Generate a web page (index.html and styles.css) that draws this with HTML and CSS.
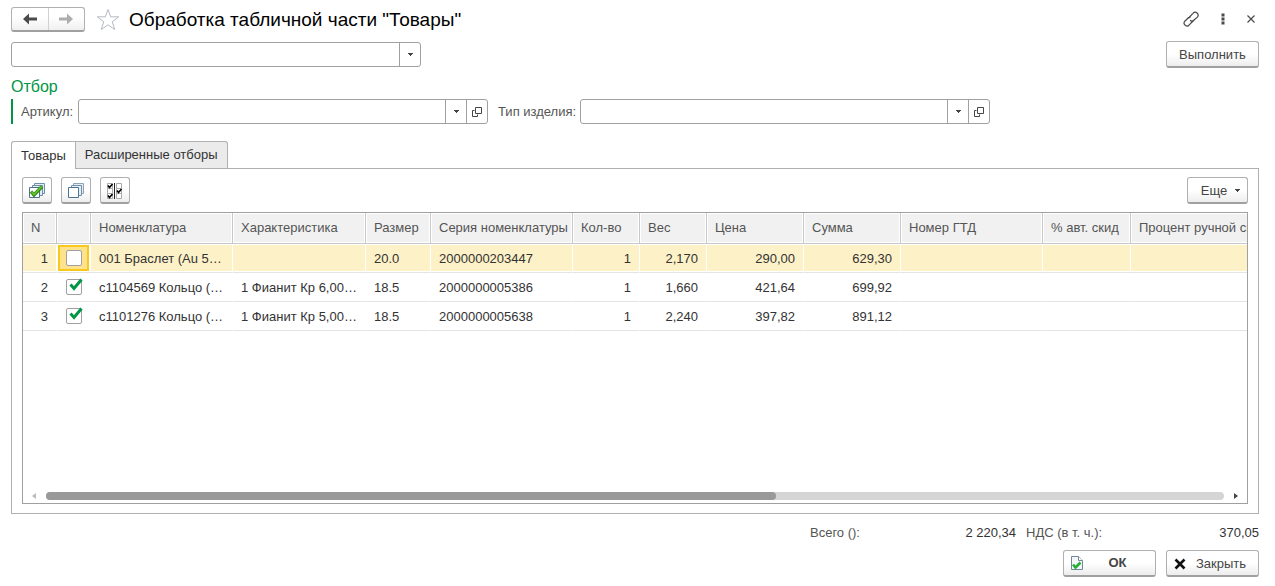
FILE: index.html
```html
<!DOCTYPE html>
<html lang="ru">
<head>
<meta charset="utf-8">
<title>Обработка табличной части "Товары"</title>
<link rel="stylesheet" href="styles.css">
</head>
<body>
<svg class="defs" aria-hidden="true">
  <symbol id="caret" viewBox="0 0 5 3"><path d="M0 0h5v1H4v1H3v1H2V2H1V1H0z" fill="#444"/></symbol>
  <symbol id="open" viewBox="0 0 10 10"><path d="M3.500.5h6v6h-6zM2.500 3.500H.5v6h5V7.500" fill="none" stroke="#444"/></symbol>
  <symbol id="tick" viewBox="0 0 14 14"><path d="M1.500 6.500 5 10.500 12.500 1.500" fill="none" stroke="#009646" stroke-width="3"/></symbol>
</svg>
<main class="page">
  <header class="titlebar">
    <div class="history">
      <button class="history-btn" aria-label="Назад"><svg width="14" height="12" viewBox="0 0 14 12"><path d="M0 6l6-5.500v4h8v3H6v4z" fill="#4a4a4a"/></svg></button>
      <button class="history-btn" aria-label="Вперед"><svg width="14" height="12" viewBox="0 0 14 12"><path d="M14 6L8 .5v4H0v3h8v4z" fill="#adadad"/></svg></button>
    </div>
    <button class="icon-btn star" aria-label="В избранное"><svg width="24" height="23" viewBox="0 0 24 23"><path d="M12 1.500l2.700 7.300h8l-6.400 4.900 2.400 7.800-6.700-4.700-6.700 4.700 2.400-7.800L1.300 8.800h8z" fill="#fff" stroke="#b4b9c1"/></svg></button>
    <h1 class="title">Обработка табличной части "Товары"</h1>
    <div class="window-tools">
      <button class="icon-btn" aria-label="Ссылка"><svg width="16" height="16" viewBox="0 0 16 16" fill="none" stroke="#4a4a4a" stroke-width="1.200" stroke-linecap="round"><path d="M6.500 6 10 2.300a2.500 2.500 0 0 1 4.300 3.800L10.800 9.300a2.400 2.400 0 0 1-3.300.2M9.500 10.500 6.300 13.800a2.500 2.500 0 0 1-4.500-3.600L5.400 6.800"/><path d="M5.400 6.800a2.400 2.400 0 0 1 1.600-.5M10.500 9.500 9.500 10.500"/></svg></button>
      <button class="icon-btn" aria-label="Меню"><svg width="4" height="12" viewBox="0 0 4 12" fill="#4a4a4a"><path d="M.5.500h3v3h-3zM.5 4.500h3v3h-3zM.5 8.500h3v3h-3z"/></svg></button>
      <button class="icon-btn" aria-label="Закрыть окно"><svg width="8" height="8" viewBox="0 0 8 8"><path d="M.5.500l7 7M7.500.500l-7 7" stroke="#4a4a4a" stroke-width="1.200"/></svg></button>
    </div>
  </header>

  <div class="action-row">
    <div class="field">
      <input class="field-input" type="text" aria-label="Действие">
      <button class="field-btn" aria-label="Выбрать действие"><svg width="5" height="3"><use href="#caret"/></svg></button>
    </div>
    <button class="btn btn-wide">Выполнить</button>
  </div>

  <section class="filter">
    <h2 class="filter-title">Отбор</h2>
    <div class="filter-row">
      <label class="filter-label" for="article">Артикул:</label>
      <div class="field">
        <input class="field-input" id="article" type="text">
        <button class="field-btn" aria-label="Список артикулов"><svg width="5" height="3"><use href="#caret"/></svg></button>
        <button class="field-btn" aria-label="Открыть артикул"><svg width="10" height="10"><use href="#open"/></svg></button>
      </div>
      <label class="filter-label" for="kind">Тип изделия:</label>
      <div class="field">
        <input class="field-input" id="kind" type="text">
        <button class="field-btn" aria-label="Список типов"><svg width="5" height="3"><use href="#caret"/></svg></button>
        <button class="field-btn" aria-label="Открыть тип"><svg width="10" height="10"><use href="#open"/></svg></button>
      </div>
    </div>
  </section>

  <div class="tabs" role="tablist">
    <button class="tab tab-active" role="tab" aria-selected="true">Товары</button>
    <button class="tab" role="tab" aria-selected="false">Расширенные отборы</button>
  </div>

  <section class="panel">
    <div class="toolbar">
      <button class="btn btn-icon" aria-label="Установить все"><svg width="16" height="16" viewBox="0 0 16 16"><g fill="#e4edf3" stroke="#6f8fa6"><path d="M5.500.5h10v10h-10z"/><path d="M3.500 2.500h10v10h-10z"/><path d="M.5 4.500h10v10H.5z" fill="#fff" stroke="#4e7390"/></g><path d="M2 8.500l3 3.500 8-8.500" fill="none" stroke="#2c8a16" stroke-width="3.400"/><path d="M2.500 8.700 5 11.500l7.500-8" fill="none" stroke="#67c52f" stroke-width="1.600"/></svg></button>
      <button class="btn btn-icon" aria-label="Снять все"><svg width="16" height="16" viewBox="0 0 16 16"><g fill="#e4edf3"><path d="M5.500.5h10v10h-10z" stroke="#8aa3b6"/><path d="M3.500 2.500h10v10h-10z" stroke="#7290a6"/><path d="M.5 4.500h10v10H.5z" fill="#fff" stroke="#4e7390"/></g></svg></button>
      <button class="btn btn-icon" aria-label="Инвертировать"><svg width="16" height="16" viewBox="0 0 16 16"><g fill="#fff" stroke="#aaa"><path d="M.5.500h5v5h-5zM.5 5.500h5v5h-5zM.5 10.500h5v5h-5zM9.500.500h5v5h-5zM9.500 5.500h5v5h-5zM9.500 10.500h5v5h-5z"/></g><path d="M7.500 0v16" stroke="#222"/><path d="M1 2.500l1.500 2L5.500 1M1 12.500l1.500 2 3-3.500M10 7.500l1.500 2 3-3.500" fill="none" stroke="#000" stroke-width="1.600"/></svg></button>
      <button class="btn btn-more">Еще <svg width="5" height="3"><use href="#caret"/></svg></button>
    </div>

    <div class="grid">
      <div class="grid-view">
        <table class="goods">
          <colgroup>
            <col class="w-tiny"><col class="w-tiny"><col class="w-name"><col class="w-feature"><col class="w-size"><col class="w-name"><col class="w-qty"><col class="w-qty"><col class="w-sum"><col class="w-sum"><col class="w-name"><col class="w-auto"><col class="w-manual">
          </colgroup>
          <thead>
            <tr><th>N</th><th></th><th>Номенклатура</th><th>Характеристика</th><th>Размер</th><th>Серия номенклатуры</th><th>Кол-во</th><th>Вес</th><th>Цена</th><th>Сумма</th><th>Номер ГТД</th><th>% авт. скид</th><th>Процент ручной ски</th></tr>
          </thead>
          <tbody>
            <tr class="current"><td class="num">1</td><td class="mark cell-focus"><label class="check"><input type="checkbox" aria-label="Строка 1"><svg class="tick" width="14" height="14"><use href="#tick"/></svg></label></td><td>001 Браслет (Au 5…</td><td></td><td>20.0</td><td>2000000203447</td><td class="num">1</td><td class="num">2,170</td><td class="num">290,00</td><td class="num">629,30</td><td></td><td></td><td></td></tr>
            <tr><td class="num">2</td><td class="mark"><label class="check"><input type="checkbox" checked aria-label="Строка 2"><svg class="tick" width="14" height="14"><use href="#tick"/></svg></label></td><td>с1104569 Кольцо (…</td><td>1 Фианит Кр 6,00…</td><td>18.5</td><td>2000000005386</td><td class="num">1</td><td class="num">1,660</td><td class="num">421,64</td><td class="num">699,92</td><td></td><td></td><td></td></tr>
            <tr><td class="num">3</td><td class="mark"><label class="check"><input type="checkbox" checked aria-label="Строка 3"><svg class="tick" width="14" height="14"><use href="#tick"/></svg></label></td><td>с1101276 Кольцо (…</td><td>1 Фианит Кр 5,00…</td><td>18.5</td><td>2000000005638</td><td class="num">1</td><td class="num">2,240</td><td class="num">397,82</td><td class="num">891,12</td><td></td><td></td><td></td></tr>
          </tbody>
        </table>
      </div>
      <div class="scroll">
        <svg width="4" height="6" viewBox="0 0 4 6"><path d="M4 0v6L0 3z" fill="#bbb"/></svg>
        <div class="scroll-track"><div class="scroll-thumb"></div></div>
        <svg width="4" height="6" viewBox="0 0 4 6"><path d="M0 0v6l4-3z" fill="#444"/></svg>
      </div>
    </div>
  </section>

  <footer class="footer">
    <dl class="totals">
      <dt>Всего ():</dt><dd>2 220,34</dd>
      <dt>НДС (в т. ч.):</dt><dd>370,05</dd>
    </dl>
    <div class="buttons">
      <button class="btn btn-wide btn-ok"><svg width="14" height="16" viewBox="0 0 14 16"><path d="M1.500 1.500h7l4 4v9h-11z" fill="#f4f7fa" stroke="#71869a"/><path d="M8.500 1.500v4h4" fill="#fff" stroke="#71869a"/><path d="M3 9.500l2.500 3 5-5" fill="none" stroke="#27b035" stroke-width="2.600"/></svg><span class="btn-text">ОК</span></button>
      <button class="btn btn-wide btn-close"><svg width="12" height="12" viewBox="0 0 12 12"><path d="M1.500 1.500l9 9M10.500 1.500l-9 9" stroke="#111" stroke-width="2.600"/></svg><span class="btn-text">Закрыть</span></button>
    </div>
  </footer>
</main>
</body>
</html>
```
FILE: styles.css
```css
* { box-sizing: border-box; }
body { margin: 0; background: #fff; color: #333; font: 13px/16px "Liberation Sans", Arial, sans-serif; }
button, input { font: inherit; color: inherit; }
button { padding: 0; margin: 0; background: none; border: 0; cursor: pointer; }
svg { display: block; flex: none; }
.defs { position: absolute; width: 0; height: 0; }

.page { display: flex; flex-direction: column; min-height: 100vh; padding: 7px 16px 9px 11px; }

.titlebar { display: flex; align-items: center; height: 25px; }
.history { display: flex; width: 74px; height: 25px; border: 1px solid #b0b0b0; border-bottom: 2px solid #a0a0a0; border-radius: 3px; background: linear-gradient(#fff 40%, #f0f0f0); }
.history-btn { flex: 1; display: flex; align-items: center; justify-content: center; }
.history-btn + .history-btn { border-left: 1px solid #d0d0d0; }
.icon-btn { display: flex; align-items: center; justify-content: center; }
.star { margin: 0 9px 0 11px; }
.title { margin: 0; color: #000; font-size: 19px; line-height: 24px; font-weight: 400; }
.window-tools { display: flex; align-items: center; gap: 20px; margin: 0 4px 2px auto; }
.window-tools .icon-btn { min-width: 8px; }

.btn { display: flex; align-items: center; justify-content: center; height: 27px; padding-top: 1px; border: 1px solid #b0b0b0; border-bottom: 2px solid #a0a0a0; border-radius: 3px; background: linear-gradient(#fff 50%, #ededed); color: #444; }
.btn-wide { width: 93px; }
.btn-icon { width: 30px; }
.btn-more { width: 61px; gap: 8px; margin-left: auto; padding-left: 6px; }

.action-row { display: flex; justify-content: space-between; align-items: center; margin-top: 9px; }
.field { display: flex; flex: 0 1 410px; height: 25px; border: 1px solid #a0a0a0; border-radius: 3px; }
.field-input { flex: 1; min-width: 0; padding: 0 6px; border: 0; background: none; outline: none; }
.field-btn { display: flex; align-items: center; justify-content: center; width: 21px; border-left: 1px solid #a0a0a0; }

.filter-title { margin: 10px 0 3px; color: #009646; font-size: 16px; line-height: 18px; font-weight: 400; }
.filter-row { display: flex; align-items: center; border-left: 2px solid #009646; padding-left: 8px; }
.filter-label { flex: none; width: 57px; color: #555; white-space: nowrap; }
.field + .filter-label { width: 82px; margin-left: 10px; }

.tabs { display: flex; margin-top: 17px; }
.tab { height: 27px; padding: 0 9px; border: 1px solid #b0b0b0; border-bottom: 0; background: #ebebeb; border-radius: 0 3px 0 0; white-space: nowrap; }
.tab-active { position: relative; height: 28px; margin-bottom: -1px; border-right: 0; background: #fff; border-radius: 3px 0 0 0; }

.panel { display: flex; flex: 1; flex-direction: column; padding: 8px 10px 9px; border: 1px solid #b0b0b0; }
.toolbar { display: flex; gap: 9px; margin-bottom: 8px; }

.grid { display: flex; flex: 1; flex-direction: column; min-width: 0; border: 1px solid #a0a0a0; }
.grid-view { flex: 1; display: grid; overflow: hidden; align-items: start; }
.goods { width: 1288px; table-layout: fixed; border-collapse: separate; border-spacing: 0; }
.w-tiny { width: 34px; }
.w-name { width: 142px; }
.w-feature { width: 133px; }
.w-size { width: 65px; }
.w-qty { width: 67px; }
.w-sum { width: 97px; }
.w-auto { width: 88px; }
.w-manual { width: 180px; }
.goods th, .goods td { overflow: hidden; padding: 0 8px; text-align: left; white-space: nowrap; font-weight: 400; }
.goods th { height: 31px; padding-right: 0; border-right: 1px solid #c8c8c8; border-bottom: 1px solid #c8c8c8; background: #f1f1f1; box-shadow: inset 0 0 0 1px #fff; color: #555; }
.goods td { height: 29px; padding-top: 1px; border-right: 1px solid #fff; border-bottom: 1px solid #e4e4e4; }
.goods .num { text-align: right; }
.goods td.mark { padding: 0; }
.current td { background: #fdf1c7; box-shadow: inset 0 1px #fff, inset 0 -1px #fff; }
.goods td.cell-focus { background: #ffe38c; box-shadow: inset 0 0 0 1px #fff, inset 0 0 0 3px #f8c81c; }
.check { position: relative; display: block; width: 16px; height: 16px; margin: 0 auto; }
.check input { display: block; width: 16px; height: 16px; margin: 0; appearance: none; border: 1px solid #a0a0a0; border-radius: 2px; background: #fff; }
.tick { position: absolute; left: 3px; top: -1px; visibility: hidden; }
.check input:checked + .tick { visibility: visible; }

.scroll { display: flex; align-items: center; gap: 10px; height: 15px; padding: 0 9px; }
.scroll-track { flex: 1; height: 8px; border-radius: 4px; background: #d5d5d5; }
.scroll-thumb { width: 62%; height: 8px; border-radius: 4px; background: #999; }

.totals { display: grid; grid-template-columns: 106px 100px 143px 100px; justify-content: end; margin: 11px 0 9px; }
.totals dt { color: #555; }
.totals dd { margin: 0; text-align: right; }
.totals dt + dd + dt { padding-left: 10px; }
.buttons { display: flex; justify-content: flex-end; gap: 10px; }
.btn-text { flex: 1; text-align: center; }
.btn-ok { padding: 0 20px 0 6px; font-weight: 700; }
.btn-ok .btn-text { padding-left: 16px; }
.btn-close { padding: 1px 8px 0 7px; }
.btn-close .btn-text { padding-left: 6px; }
```
